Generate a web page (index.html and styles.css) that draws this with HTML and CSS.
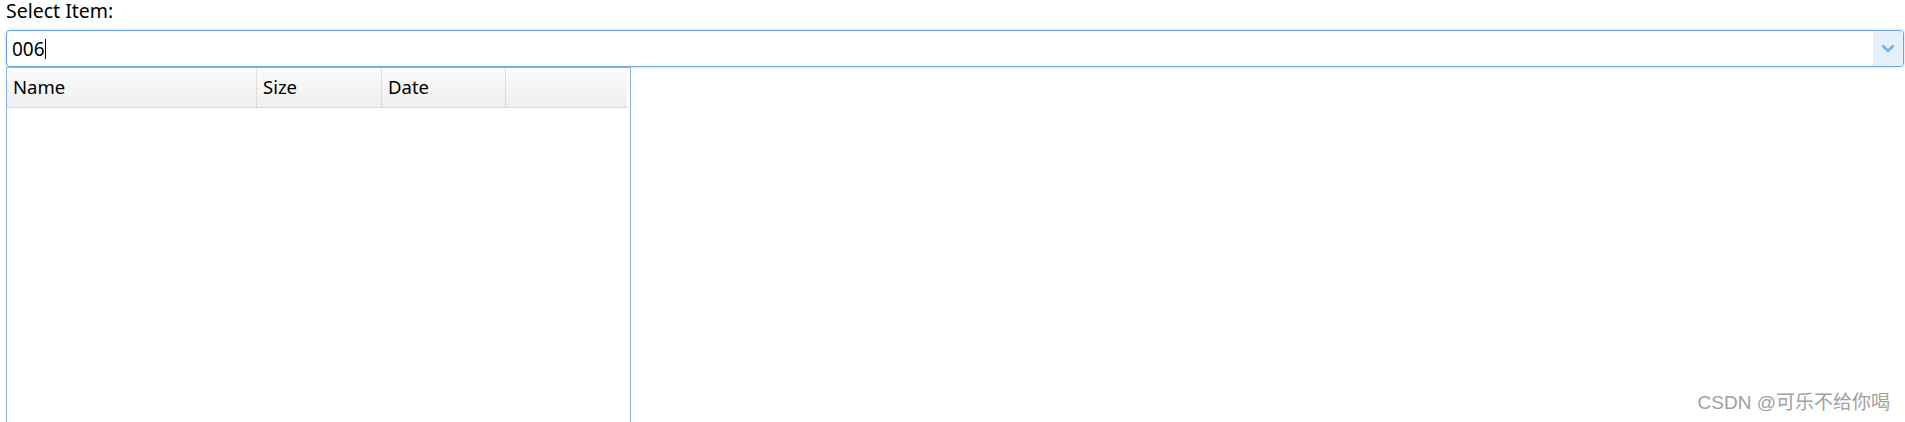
FILE: index.html
```html
<!DOCTYPE html>
<html>
<head>
<meta charset="utf-8">
<link rel="stylesheet" href="styles.css">
</head>
<body>
<div class="app">
  <div class="label">Select Item:</div>
  <div class="combo">
    <div class="combo-text">006<span class="caret"></span></div>
    <div class="combo-btn">
      <svg width="14" height="9" viewBox="0 0 14 9"><polyline points="1.5,1.5 7,7 12.5,1.5" fill="none" stroke="#6cb4ef" stroke-width="2.6"/></svg>
    </div>
  </div>
  <div class="main">
    <div class="list">
      <div class="header">
        <div class="col col-name">Name</div>
        <div class="col col-size">Size</div>
        <div class="col col-date">Date</div>
        <div class="col col-rest"></div>
      </div>
    </div>
    <div class="pane"></div>
  </div>
  <div class="watermark">CSDN @可乐不给你喝</div>
</div>
</body>
</html>
```
FILE: styles.css
```css
html, body {
  margin: 0;
  padding: 0;
  background: #ffffff;
  overflow: hidden;
}
.app {
  position: relative;
  width: 1905px;
  height: 422px;
  font-family: "Noto Sans", "Open Sans", sans-serif;
  color: #000;
  display: flex;
  flex-direction: column;
}
.label {
  height: 30px;
  padding-left: 6px;
  font-size: 19.5px;
  line-height: 22px;
}
.combo {
  margin: 0 1px 0 6px;
  height: 37px;
  box-sizing: border-box;
  border: 1px solid #6ea3e6;
  border-radius: 4px;
  box-shadow: 0 0 3px rgba(120, 170, 235, 0.55);
  display: flex;
  overflow: hidden;
  background: #fff;
}
.combo-text {
  flex: 1;
  padding-left: 5px;
  font-size: 19px;
  line-height: 34px;
  display: flex;
  align-items: center;
}
.caret {
  display: inline-block;
  width: 1px;
  height: 20px;
  background: #000;
  margin-left: 0px;
}
.combo-btn {
  width: 30px;
  background: #e6f1fc;
  display: flex;
  align-items: center;
  justify-content: center;
}
.main {
  flex: 1;
  display: flex;
  min-height: 0;
}
.list {
  margin-left: 6px;
  width: 625px;
  box-sizing: border-box;
  border: 1px solid #8fb4ea;
  border-bottom: none;
  padding-right: 3px;
}
.header {
  display: flex;
  height: 40px;
  box-sizing: border-box;
  background: linear-gradient(#fbfbfb, #efefef);
  border-bottom: 1px solid #d8d8d8;
}
.col {
  box-sizing: border-box;
  font-size: 18.5px;
  line-height: 38px;
  padding-left: 6px;
  border-right: 1px dotted #c6c6c6;
}
.col-name { width: 250px; }
.col-size { width: 125px; }
.col-date { width: 124px; }
.col-rest { flex: 1; border-right: none; }
.pane {
  flex: 1;
}
.watermark {
  position: absolute;
  right: 15px;
  bottom: 8px;
  font-family: "Liberation Sans", "Noto Sans CJK SC", sans-serif;
  font-size: 19px;
  color: #a0a0a0;
  text-shadow: 0 0 1px rgba(255,255,255,0.8);
}
```
